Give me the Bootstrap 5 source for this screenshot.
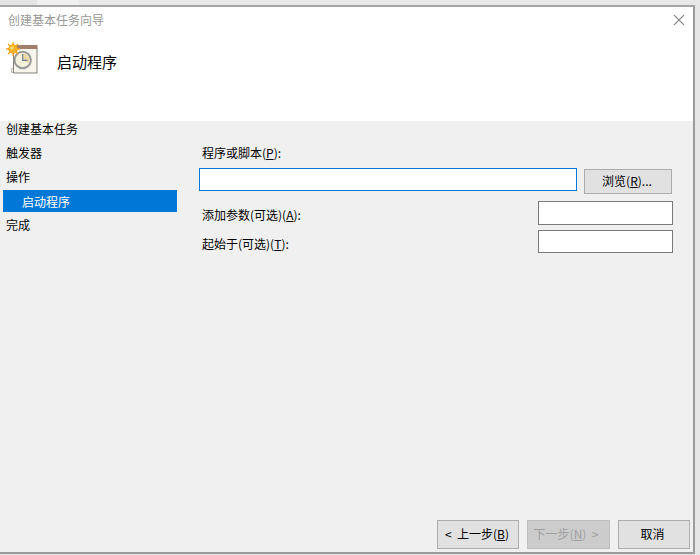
<!doctype html>
<html lang="zh">
<head>
<meta charset="utf-8">
<title>创建基本任务向导</title>
<link href="https://cdn.jsdelivr.net/npm/bootstrap@5.3.0/dist/css/bootstrap.min.css" rel="stylesheet">
<style>
html,body{height:555px;overflow:hidden}
body{background:#e6e6e6;font-family:"Noto Sans CJK SC","Liberation Sans",sans-serif;font-size:12px;color:#000;line-height:16px}
.desk-strip{height:5px;background:linear-gradient(90deg,#e4e4e4 0 37px,#efefef 37px 79px,#e8e8e8 79px)}
.wiz{width:695px;height:549px;background:#f0f0f0;border-top:2px solid #a6a6a6;border-right:2px solid #9b9b9b;border-bottom:2px solid #9b9b9b}
.wiz-head{height:114px;background:#fff;padding:5px 0 0 8px;flex:none}
.wiz-title{color:#999;height:16px}
.wiz-x{width:12px;height:12px;margin:2px 8px 0 0}
.wiz-hero{margin:14px 0 0 -2px;gap:19px}
.wiz-hero svg{width:32px;height:32px;flex:none}
.wiz-step{font-size:15px;line-height:20px;margin-top:10px}
.wiz-body{min-height:0}
.steps{width:177px;padding:0 0 0 3px;flex:none;margin-top:-4px}
.steps li{height:24px;padding:0 0 0 3px;line-height:16px;display:flex;align-items:center}
.steps li.on{height:22px;margin:1px 0;background:#0078d7;color:#fff;padding:1px 0 0 19px}
.form-pane{padding:24px 0 0 22px;width:496px}
.lbl{padding-left:3px;height:16px}
.fld{border:1px solid #7a7a7a;background:#fff;border-radius:0;height:24px;padding:0 3px;font-size:12px;outline:0;display:block}
.fld.act{border-color:#0078d7;width:378px;height:23px}
.fld.sm{width:135px}
.r1{margin-top:7px;gap:7px;align-items:flex-start}
.r2{margin-top:7px;height:24px}
.r3{margin-top:5px;height:23px}
.r2,.r3{width:474px;justify-content:space-between;align-items:flex-start}
.r2 .lbl,.r3 .lbl{margin-top:6px}
.r3 .fld{height:23px}
.wbtn{background:#e1e1e1;border:1px solid #adadad;border-radius:0;color:#000;font-size:12px;line-height:16px;padding:0 0 2px;height:25px}
.wbtn:hover{background:#e1e1e1;border-color:#adadad;color:#000}
.wbtn.browse{width:88px;margin-top:1px;padding-right:2px}
.wiz-foot{padding:0 3px 3px 0;gap:8px;flex:none}
.wiz-foot .wbtn{height:29px}
.b1{width:82px;padding-right:2px !important}.b2{width:83px;padding-right:5px !important}.b3{width:72px;padding-right:3px !important}
.wbtn:disabled,.wbtn.off{background:#ccc;border-color:#bfbfbf;color:#a0a0a0;opacity:1}
</style>
</head>
<body>
<div class="desk-strip"></div>
<div class="wiz d-flex flex-column">
  <div class="wiz-head">
    <div class="d-flex justify-content-between">
      <div class="wiz-title">创建基本任务向导</div>
      <svg class="wiz-x" viewBox="0 0 12 12"><path d="M1 1l10 10M11 1L1 11" stroke="#8c8c8c" stroke-width="1.1" fill="none"/></svg>
    </div>
    <div class="wiz-hero d-flex align-items-start">
      <svg viewBox="0 0 32 32">
        <path d="M5.5 26.5h22v4h-22z" fill="#ecebe6" stroke="#b5b3ab" stroke-width=".8"/>
        <path d="M7.5 6.5h23.500v24.500h-23.500z" fill="#f7f5ec" stroke="#85817a"/>
        <rect x="10" y="3" width="21.500" height="4" fill="#a27f6b"/>
        <circle cx="16.700" cy="18" r="8.200" fill="#f6f1dc" stroke="#9a9a9a" stroke-width="2"/>
        <path d="M16.700 18V11.500A6.500 6.500 0 0 1 22.500 21z" fill="#f0d9a0"/>
        <path d="M16.700 12V18.300H21.500" stroke="#6c7f98" stroke-width="1.200" fill="none"/>
        <g stroke="#f4a51c" stroke-width="1.300"><path d="M7 0v14M0 7h14M2 2l10 10M12 2L2 12"/></g>
        <circle cx="7" cy="7" r="4.400" fill="#fbb324" stroke="#f09a12" stroke-width=".6"/>
        <circle cx="6" cy="6" r="1.800" fill="#ffdd70"/>
      </svg>
      <div class="wiz-step">启动程序</div>
    </div>
  </div>
  <div class="wiz-body d-flex flex-grow-1">
    <ul class="steps list-unstyled mb-0">
      <li>创建基本任务</li>
      <li>触发器</li>
      <li>操作</li>
      <li class="on">启动程序</li>
      <li>完成</li>
    </ul>
    <div class="form-pane">
      <div class="lbl">程序或脚本(<u>P</u>):</div>
      <div class="r1 d-flex">
        <input class="fld act" type="text" aria-label="程序或脚本">
        <button class="btn wbtn browse" type="button">浏览(<u>R</u>)...</button>
      </div>
      <div class="r2 d-flex">
        <span class="lbl">添加参数(可选)(<u>A</u>):</span>
        <input class="fld sm" type="text" aria-label="添加参数">
      </div>
      <div class="r3 d-flex">
        <span class="lbl">起始于(可选)(<u>T</u>):</span>
        <input class="fld sm" type="text" aria-label="起始于">
      </div>
    </div>
  </div>
  <div class="wiz-foot d-flex justify-content-end">
    <button class="btn wbtn b1" type="button">&lt;&nbsp;&nbsp;上一步(<u>B</u>)</button>
    <button class="btn wbtn b2 off" type="button" disabled>下一步(<u>N</u>)&nbsp;&nbsp;&gt;</button>
    <button class="btn wbtn b3" type="button">取消</button>
  </div>
</div>
</body>
</html>
